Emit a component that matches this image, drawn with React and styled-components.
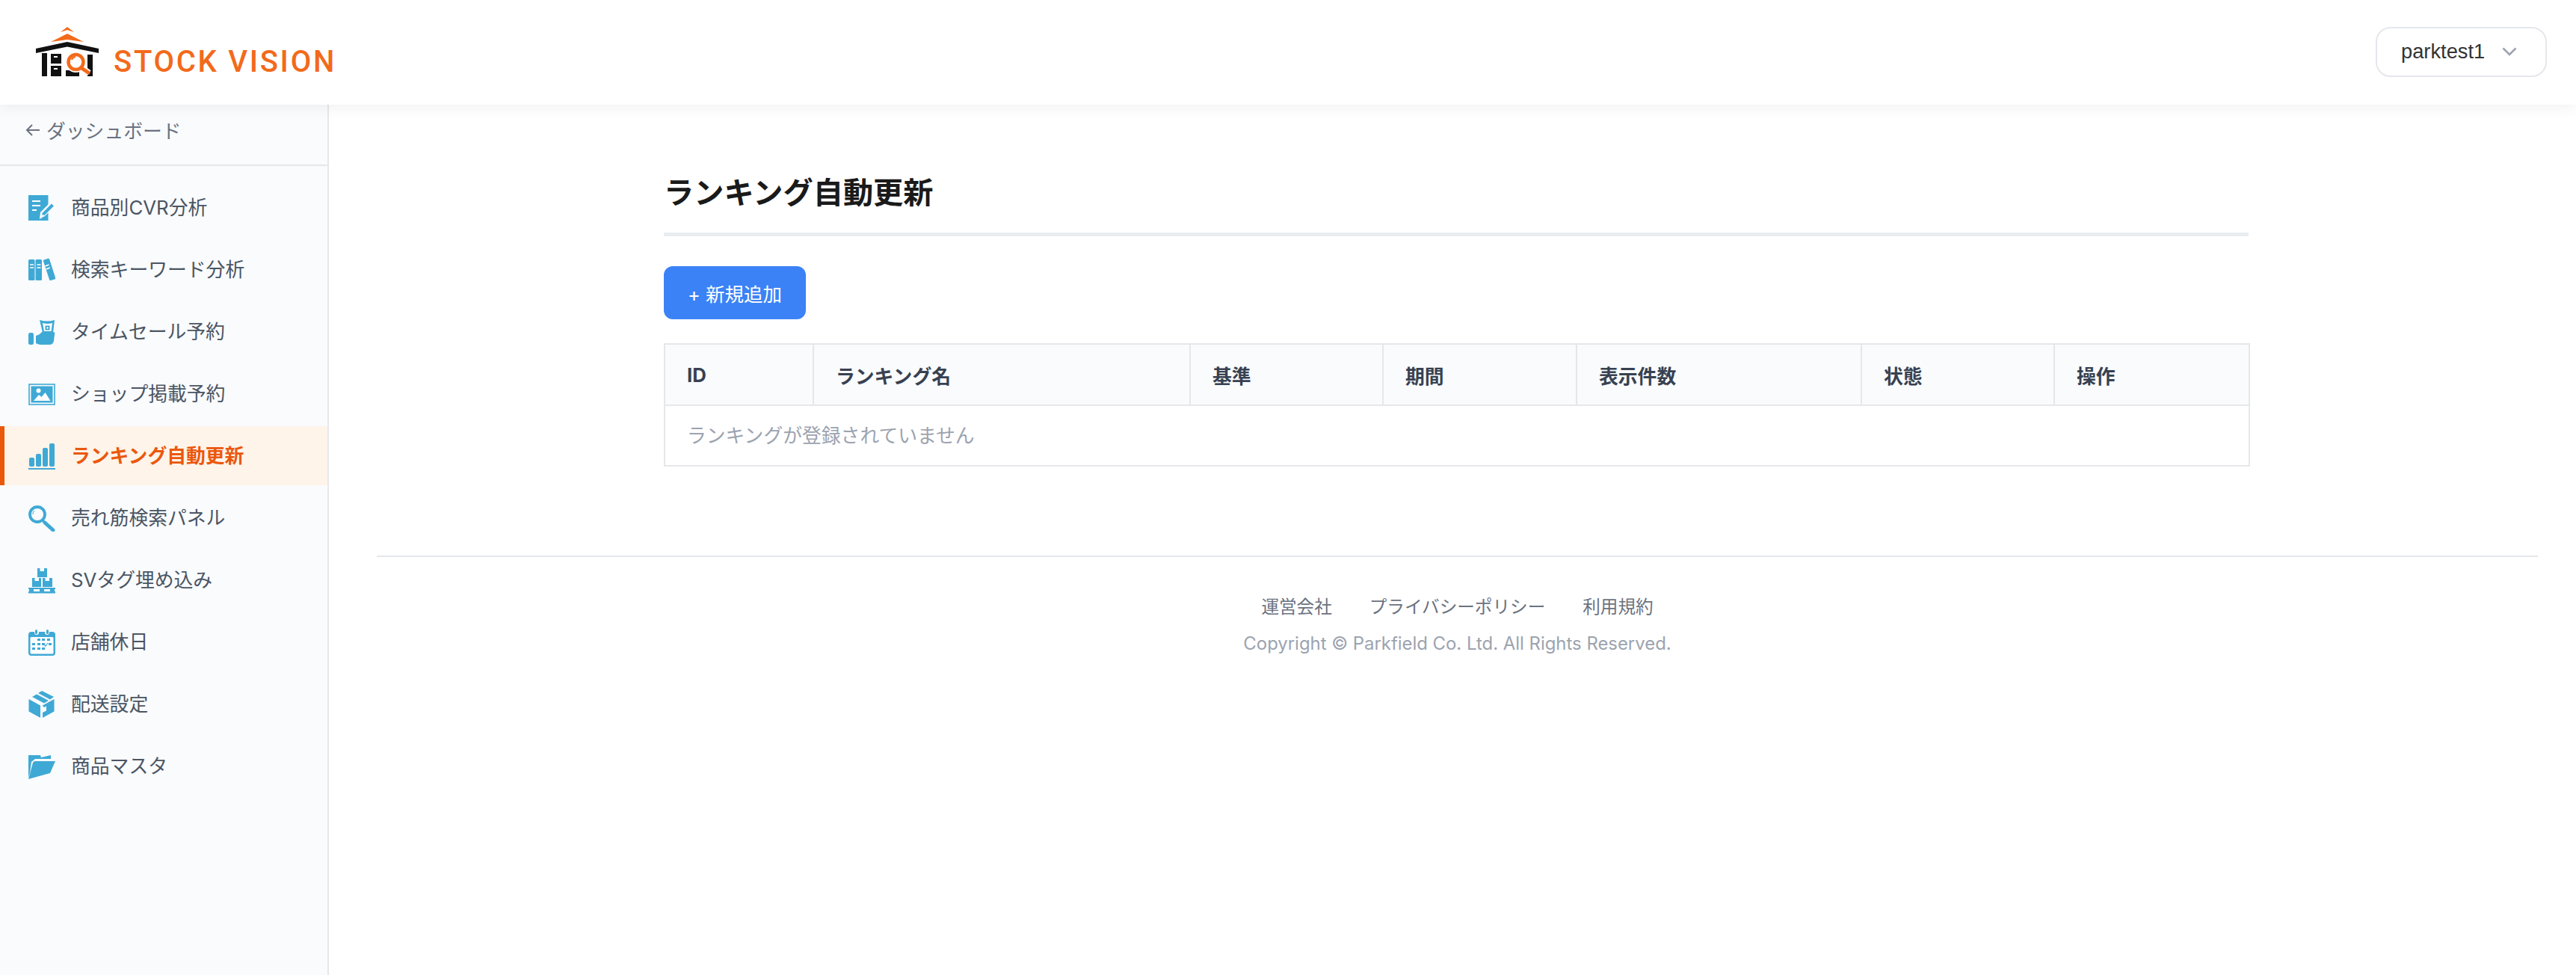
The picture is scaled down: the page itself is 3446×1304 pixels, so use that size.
import React from "react";
import styled, { createGlobalStyle } from "styled-components";

const BLUE = "#3fa9d5";
const ORANGE = "#f26a1b";

const GlobalStyle = createGlobalStyle`
  html, body {
    margin: 0;
    padding: 0;
    background: #fff;
    font-family: Inter, "Noto Sans CJK JP", sans-serif;
  }
  * {
    box-sizing: border-box;
  }
`;

const Page = styled.div`
  display: flex;
  flex-direction: column;
  width: 3446px;
  height: 1304px;
  overflow: hidden;
`;

const Header = styled.header`
  position: relative;
  z-index: 2;
  display: flex;
  align-items: center;
  justify-content: space-between;
  flex: 0 0 140px;
  padding: 0 39px 2px 48px;
  background: #fff;
  box-shadow: 0 4px 18px rgba(0, 0, 0, 0.06);
`;

const Logo = styled.div`
  display: flex;
  align-items: flex-end;
  gap: 20px;
`;

const LogoText = styled.span`
  font-family: Roboto, sans-serif;
  font-weight: 500;
  font-size: 40px;
  line-height: 29px;
  letter-spacing: 2.7px;
  color: ${ORANGE};
  white-space: nowrap;
  margin-bottom: 5px;
`;

const UserSelect = styled.div`
  display: flex;
  align-items: center;
  justify-content: space-between;
  width: 229px;
  height: 67px;
  padding: 0 38px 0 32px;
  border: 2px solid #e5e7eb;
  border-radius: 20px;
  background: #fff;
  font-family: "Liberation Sans", sans-serif;
  font-size: 27.3px;
  color: #333;
`;

const Body = styled.div`
  display: flex;
  flex: 1;
  min-height: 0;
`;

const Sidebar = styled.aside`
  flex: 0 0 440px;
  background: #f9fbfd;
  border-right: 2px solid #e5e7eb;
`;

const BackLink = styled.div`
  display: flex;
  align-items: center;
  gap: 8px;
  height: 82px;
  padding: 0 0 13px 34px;
  border-bottom: 2px solid #e5e7eb;
  font-size: 25.8px;
  color: #6b7280;
`;

const Nav = styled.nav`
  display: flex;
  flex-direction: column;
  gap: 4px;
  padding-top: 16px;
`;

const NavItem = styled.div`
  display: flex;
  align-items: center;
  gap: 21px;
  height: 79px;
  padding: 0 0 4px 32px;
  border-left: 6px solid ${(p) => (p.$active ? "#ea580c" : "transparent")};
  background: ${(p) => (p.$active ? "#fff4ea" : "transparent")};
  font-size: 25.8px;
  font-weight: ${(p) => (p.$active ? 700 : 400)};
  color: ${(p) => (p.$active ? "#ea580c" : "#4b5563")};
  svg {
    flex: 0 0 36px;
    margin-top: 4px;
  }
`;

const Main = styled.main`
  flex: 1;
  padding: 0 51px 0 64px;
`;

const Content = styled.section`
  width: 2120px;
  margin-left: 384px;
  padding-top: 96px;
`;

const Title = styled.h1`
  margin: 0;
  padding-bottom: 31px;
  border-bottom: 5px solid #e9edf0;
  font-size: 40.2px;
  line-height: 44px;
  font-weight: 700;
  color: #1a1a1a;
`;

const AddButton = styled.button`
  display: block;
  width: 190px;
  height: 71px;
  margin-top: 40px;
  border: 0;
  border-radius: 12px;
  background: #3b82f6;
  color: #fff;
  font-family: inherit;
  font-size: 25.5px;
`;

const Table = styled.table`
  width: 2120px;
  margin-top: 32px;
  table-layout: fixed;
  border-collapse: collapse;
`;

const Th = styled.th`
  width: ${(p) => p.$width}px;
  height: 82px;
  padding: 0 29px;
  border: 2px solid #e5e7eb;
  background: #f9fbfc;
  text-align: left;
  font-size: 25.8px;
  font-weight: 700;
  color: #374151;
`;

const EmptyCell = styled.td`
  height: 81px;
  padding: 0 29px 4px;
  border: 2px solid #e5e7eb;
  font-size: 25.8px;
  color: #9ca3af;
`;

const Footer = styled.footer`
  margin-top: 119px;
  padding-top: 52px;
  border-top: 2px solid #e5e7eb;
  text-align: center;
`;

const FooterLinks = styled.div`
  display: flex;
  justify-content: center;
  gap: 50px;
  font-size: 23.6px;
  line-height: 30px;
  color: #6b7280;
`;

const Copyright = styled.div`
  margin-top: 19px;
  font-size: 23.9px;
  line-height: 30px;
  color: #9ca3af;
`;

const LogoMark = () => (
  <svg width="84" height="66" viewBox="0 0 84 66">
    <path d="M33 7 42 0l9 7-9-3z" fill={ORANGE} />
    <path d="M20 20 42 9l22 11-22-3z" fill={ORANGE} />
    <path d="M0 29 42 20l42 9v6L42 26.5 0 35z" fill="#111" />
    <path d="M8 35h7v31H8zM69 37h7v29h-7zM40 58h18v8H40z" fill="#111" />
    <path d="M20 36h14v13H20zM20 52h14v14H20z" fill="#111" />
    <path d="M24 39h5v2h-5zM24 55h5v2h-5z" fill="#fff" />
    <circle cx="53.5" cy="47" r="14" fill="#fff" />
    <path d="M61 55 71 62" stroke="#fff" strokeWidth="9" />
    <circle cx="53.5" cy="47" r="10" fill="#fff" stroke={ORANGE} strokeWidth="4.5" />
    <path d="M48 44a6 6 0 0 1 5-4" stroke={ORANGE} strokeWidth="2" fill="none" />
    <path d="M61 55 70 61" stroke={ORANGE} strokeWidth="5" strokeLinecap="round" />
  </svg>
);

const Chevron = () => (
  <svg width="20" height="12" viewBox="0 0 20 12">
    <path d="M1.5 1.5 10 10l8.5-8.5" fill="none" stroke="#9ca3af" strokeWidth="2.6" />
  </svg>
);

const Arrow = () => (
  <svg width="20" height="18" viewBox="0 0 20 18">
    <path d="M9 2 2 9l7 7M2 9h17" fill="none" stroke="#6b7280" strokeWidth="2" />
  </svg>
);

const Icon = ({ children }) => (
  <svg width="36" height="36" viewBox="0 0 36 36" fill={BLUE}>
    {children}
  </svg>
);

const icons = {
  memo: (
    <Icon>
      <rect x="0" y="1" width="26.5" height="34" />
      <path d="M5 9h11M5 15h11M5 21h6" stroke="#fff" strokeWidth="2" />
      <path d="M15 33l1-9L30 10l6 5-14 14z" fill="#fff" />
      <path d="M18 31l.5-6L31 12.5l3 3L21.5 28z" fill={BLUE} />
      <path d="M18 31l.5-4 3 1z" fill="#fff" />
    </Icon>
  ),
  books: (
    <Icon>
      <rect x="0" y="4" width="8.5" height="28" rx="1.5" />
      <rect x="9.5" y="4" width="8.5" height="28" rx="1.5" />
      <rect x="24" y="3" width="8.5" height="29" rx="1.5" transform="rotate(-18 28 18)" />
      <path d="M2 11h5M2 15h5M11.5 11h5M11.5 15h5M22.5 13l5-2M23.8 17l5-2" stroke="#fff" strokeWidth="1.5" />
    </Icon>
  ),
  sale: (
    <Icon>
      <rect x="0" y="19" width="7" height="16" rx="2.5" />
      <path d="M10 23q5-1 8-5h15q3 0 2 3l-1 9q-1 5-6 5H17q-4 0-7-2z" />
      <path d="M15 2q10 3 20 0l-2 17H19z" />
      <path d="M19 6q7 2 13 0l-1.500 11H21z" fill="#fff" />
      <path d="M22.500 9.500h6v6h-6z" />
      <path d="M24 12.500h3M25.500 11v3" stroke="#fff" strokeWidth="0.900" />
    </Icon>
  ),
  image: (
    <Icon>
      <rect x="1" y="5" width="34" height="27" fill="none" stroke={BLUE} strokeWidth="1.600" />
      <rect x="3.500" y="7.500" width="29" height="22" />
      <circle cx="13.500" cy="13.500" r="3" fill="#fff" />
      <path d="M7 27l7-8 3.500 3 5-6 7 11z" fill="#fff" />
    </Icon>
  ),
  chart: (
    <Icon>
      <rect x="1" y="20" width="7" height="12" rx="2" />
      <rect x="10" y="15" width="7" height="17" rx="2" />
      <rect x="19" y="7" width="7" height="25" rx="2" />
      <rect x="28" y="1" width="7" height="31" rx="2" />
      <rect x="0" y="34" width="36" height="2" />
    </Icon>
  ),
  search: (
    <Icon>
      <circle cx="12" cy="13" r="10" fill="none" stroke={BLUE} strokeWidth="3.800" />
      <path d="M6 13a6 6 0 0 1 2-5" fill="none" stroke={BLUE} strokeWidth="1" />
      <path d="M18 20l3 3" stroke={BLUE} strokeWidth="3" />
      <path d="M22 24l11 10" stroke={BLUE} strokeWidth="5" strokeLinecap="round" />
    </Icon>
  ),
  pallet: (
    <Icon>
      <path d="M12 2h3.500v4h5.500V2h4v12H12zM5 15h3.500v4H14v-4h3v12H5zM19 15h3.500v4h5.500v-4h4v12H19z" />
      <path d="M0 28h36v2H0zM0 33h36v2.500H0zM1 30h6v3H1zM15 30h6v3h-6zM29 30h6v3h-6z" />
    </Icon>
  ),
  calendar: (
    <Icon>
      <path d="M4 4h4v1a3 3 0 0 0 6 0V4h8v1a3 3 0 0 0 6 0V4h4a4 4 0 0 1 4 4v24a4 4 0 0 1-4 4H4a4 4 0 0 1-4-4V8a4 4 0 0 1 4-4z" />
      <rect x="2.500" y="11" width="31" height="22.500" rx="1.500" fill="#fff" />
      <rect x="9" y="1" width="3" height="6" rx="1.500" />
      <rect x="24" y="1" width="3" height="6" rx="1.500" />
      <path d="M12 13h4v3h-4zM18 13h4v3h-4zM25 13h4v3h-4zM5 19h4v3H5zM12 19h4v3h-4zM18 19h4v3h-4zM27 19h4v3h-4zM5 25h4v3H5zM12 25h4v3h-4zM18 25h4v3h-4z" />
      <path d="M21 21l2 2 3-4" fill="none" stroke={BLUE} strokeWidth="1.200" />
    </Icon>
  ),
  box: (
    <Icon>
      <path d="M0.500 11 16 19.500V36L0.500 27.500z" />
      <path d="M19 19.500 34.500 11v16.500L19 36v-7l5-2.500v-6l-3 1.500-2-2z" />
      <path d="M5 8l6-3.500 16 8.500-6 3.500zM13 3l5-3 16 8-5 3.500z" />
    </Icon>
  ),
  folder: (
    <Icon>
      <path d="M0 3h16l1 3 13-3v5H9L4 12 2 26l-2 7z" />
      <path d="M0 35 6 13q1-2 3-2h27L29 27z" />
    </Icon>
  ),
};

const menu = [
  { label: "商品別CVR分析", icon: "memo" },
  { label: "検索キーワード分析", icon: "books" },
  { label: "タイムセール予約", icon: "sale" },
  { label: "ショップ掲載予約", icon: "image" },
  { label: "ランキング自動更新", icon: "chart", active: true },
  { label: "売れ筋検索パネル", icon: "search" },
  { label: "SVタグ埋め込み", icon: "pallet" },
  { label: "店舗休日", icon: "calendar" },
  { label: "配送設定", icon: "box" },
  { label: "商品マスタ", icon: "folder" },
];

const columns = [
  { label: "ID", width: 199 },
  { label: "ランキング名", width: 504 },
  { label: "基準", width: 258 },
  { label: "期間", width: 259 },
  { label: "表示件数", width: 381 },
  { label: "状態", width: 258 },
  { label: "操作", width: 261 },
];

export default function App() {
  return (
    <Page>
      <GlobalStyle />
      <Header>
        <Logo>
          <LogoMark />
          <LogoText>STOCK VISION</LogoText>
        </Logo>
        <UserSelect>
          parktest1
          <Chevron />
        </UserSelect>
      </Header>
      <Body>
        <Sidebar>
          <BackLink>
            <Arrow />
            ダッシュボード
          </BackLink>
          <Nav>
            {menu.map((item) => (
              <NavItem key={item.label} $active={item.active}>
                {icons[item.icon]}
                {item.label}
              </NavItem>
            ))}
          </Nav>
        </Sidebar>
        <Main>
          <Content>
            <Title>ランキング自動更新</Title>
            <AddButton>+ 新規追加</AddButton>
            <Table>
              <thead>
                <tr>
                  {columns.map((col) => (
                    <Th key={col.label} $width={col.width}>
                      {col.label}
                    </Th>
                  ))}
                </tr>
              </thead>
              <tbody>
                <tr>
                  <EmptyCell colSpan={7}>ランキングが登録されていません</EmptyCell>
                </tr>
              </tbody>
            </Table>
          </Content>
          <Footer>
            <FooterLinks>
              <span>運営会社</span>
              <span>プライバシーポリシー</span>
              <span>利用規約</span>
            </FooterLinks>
            <Copyright>Copyright © Parkfield Co. Ltd. All Rights Reserved.</Copyright>
          </Footer>
        </Main>
      </Body>
    </Page>
  );
}
